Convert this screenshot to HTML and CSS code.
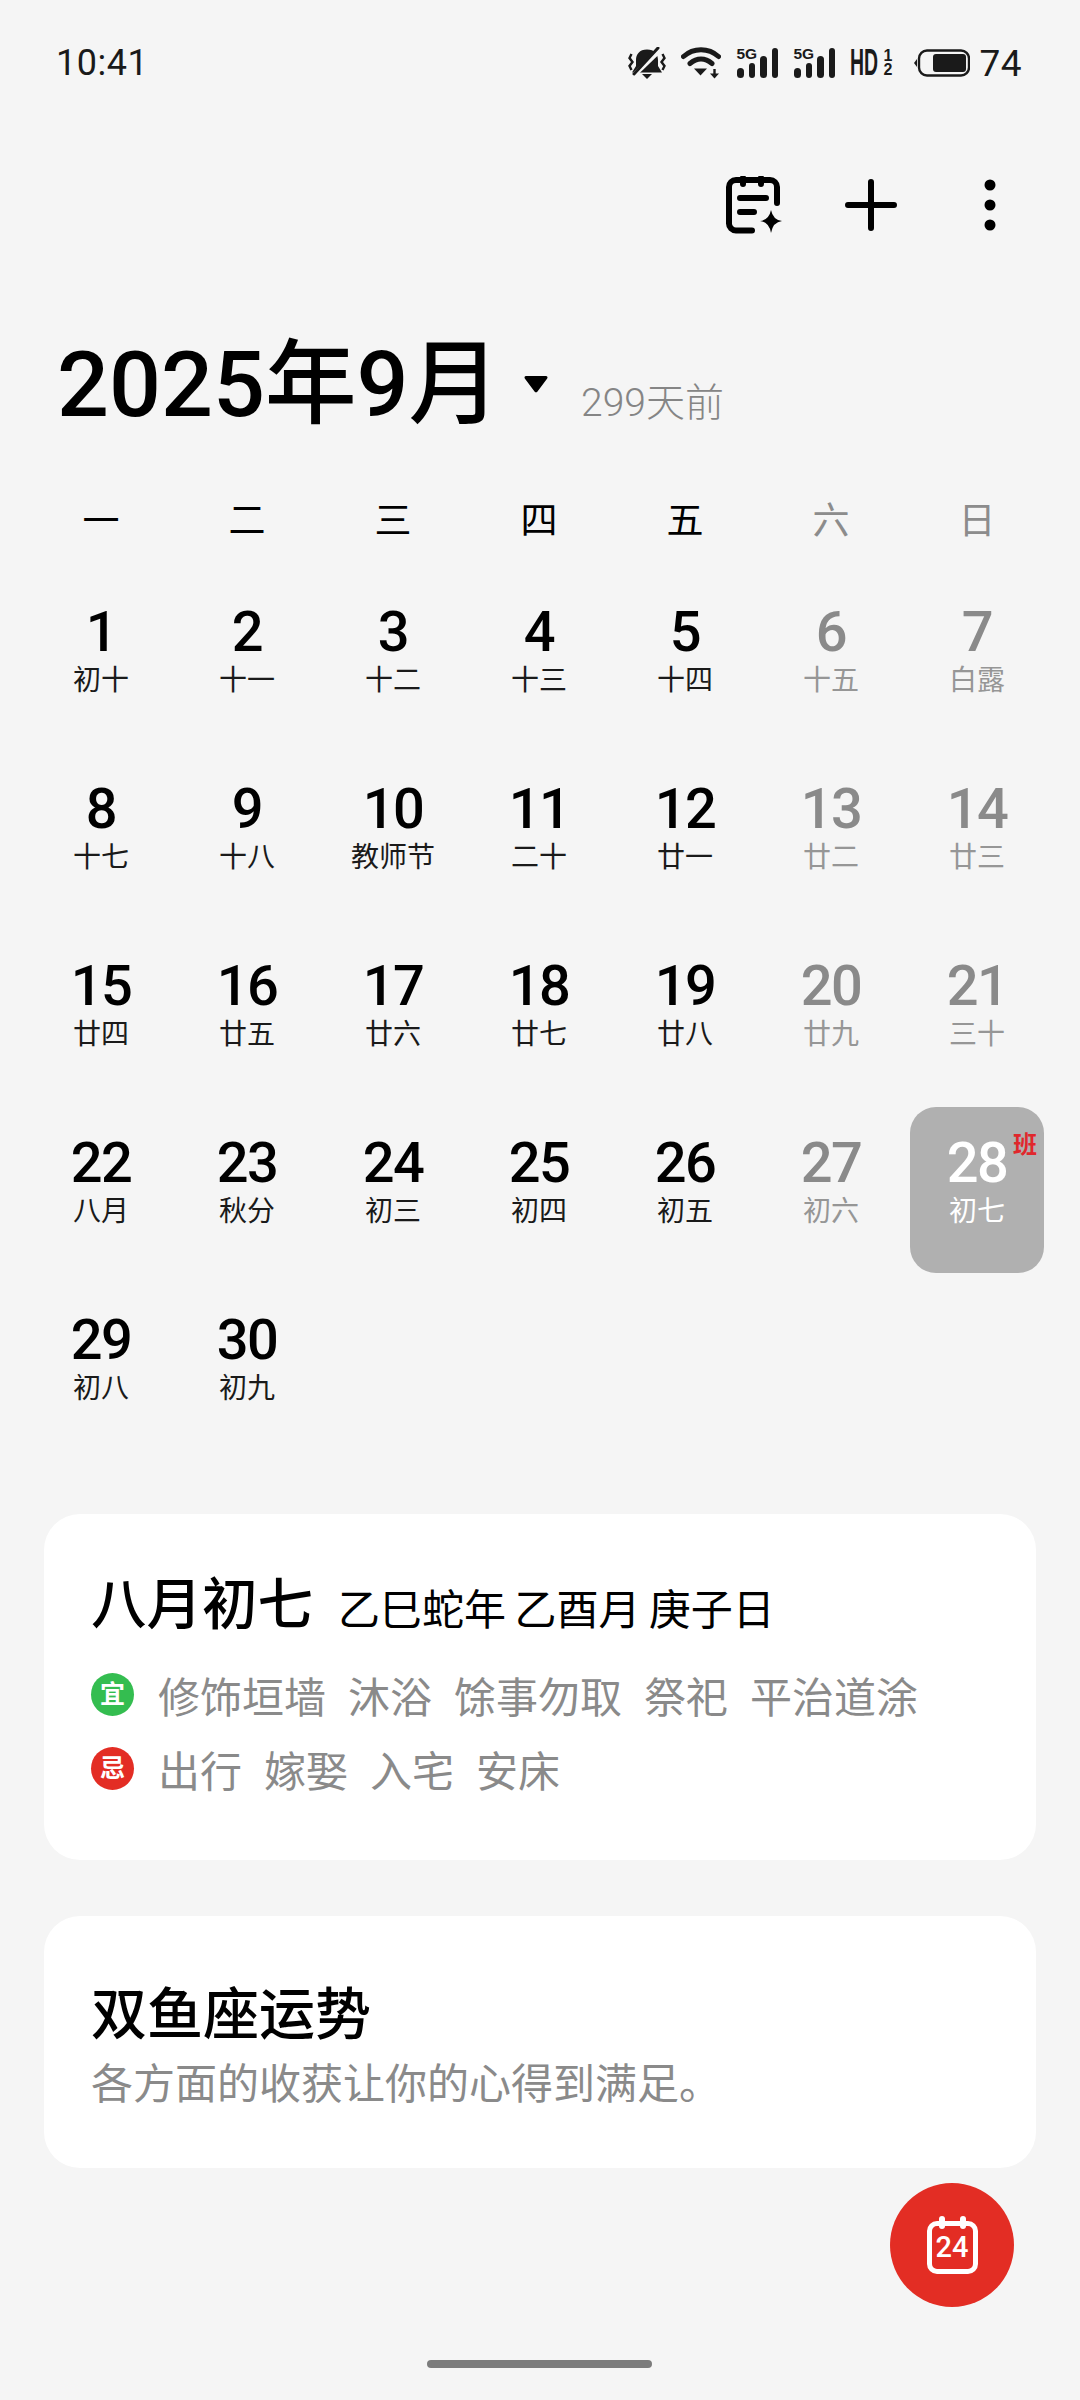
FILE: index.html
```html
<!DOCTYPE html>
<html lang="zh-CN">
<head>
<meta charset="utf-8">
<title>日历</title>
<link rel="stylesheet" href="styles.css">
</head>
<body>
<div class="page">
  <header class="status">
    <span class="time">10:41</span>
    <div class="status-icons">
      <svg class="ic-bell" viewBox="0 0 38 32"><path d="M19 2.500c-7.500 0-11 5-11 10.500v6l-4 6.500h30l-4-6.500v-6c0-5.500-3.500-10.500-11-10.500z" fill="#1a1a1a"/><path d="M14 27h10l-5 5z" fill="#1a1a1a"/><path d="M4 30L32 3" stroke="#f5f5f5" stroke-width="5"/><path d="M6 27L30 1" stroke="#1a1a1a" stroke-width="3" stroke-linecap="round"/><path d="M3.500 7L1.500 11l3 4-3 4 2 4M34.500 7l2 4-3 4 3 4-2 4" fill="none" stroke="#1a1a1a" stroke-width="2.400"/></svg>
      <svg class="ic-wifi" viewBox="0 0 40 32"><path d="M2.500 9.500c10-9 25-9 35 0M9 16.500c7-6 15-6 22 0" fill="none" stroke="#1a1a1a" stroke-width="5" stroke-linecap="round"/><path d="M13 21.500h13l-6.500 7z" fill="#1a1a1a"/><path d="M33.500 22v5" stroke="#1a1a1a" stroke-width="2.400"/><path d="M29 26.500h9l-4.500 5z" fill="#1a1a1a"/></svg>
      <div class="signal"><span class="sg">5G</span><i class="b b1"></i><i class="b b2"></i><i class="b b3"></i><i class="b b4"></i></div>
      <div class="signal"><span class="sg">5G</span><i class="b b1"></i><i class="b b2"></i><i class="b b3"></i><i class="b b4"></i></div>
      <div class="hd"><span class="hd-t">HD</span><span class="hd-n"><span>1</span><span>2</span></span></div>
      <svg class="ic-batt" viewBox="0 0 57 28"><path d="M4 10l-3 4 3 4z" fill="#1a1a1a"/><rect x="6" y="1.500" width="50" height="25" rx="8" fill="none" stroke="#1a1a1a" stroke-width="2.400"/><rect x="20" y="5" width="33" height="18" rx="3" fill="#1a1a1a"/></svg>
      <span class="pct">74</span>
    </div>
  </header>

  <div class="toolbar">
    <svg class="ic-note" viewBox="0 0 56 58"><path d="M26 54.500H10a7 7 0 0 1-7-7V11a7 7 0 0 1 7-7h34a7 7 0 0 1 7 7v16" fill="none" stroke="#000" stroke-width="6" stroke-linecap="round"/><path d="M17 2v6M35 2v6" stroke="#000" stroke-width="6" stroke-linecap="round"/><path d="M14 22h26M14 36h14" stroke="#000" stroke-width="6" stroke-linecap="round"/><path d="M45 34q2 10 11 11q-9 1-11 12q-2-11-11-12q9-1 11-11z" fill="#000"/></svg>
    <svg class="ic-plus" viewBox="0 0 52 52"><path d="M26 3v46M3 26h46" stroke="#000" stroke-width="6" stroke-linecap="round"/></svg>
    <svg class="ic-more" viewBox="0 0 12 52"><circle cx="6" cy="6" r="5.500"/><circle cx="6" cy="26" r="5.500"/><circle cx="6" cy="46" r="5.500"/></svg>
  </div>

  <div class="heading">
    <h1 class="month">2025年9月</h1>
    <svg class="caret" viewBox="0 0 26 20"><path d="M3 2h20a1.500 1.500 0 0 1 1.200 2.400L14.500 17.500a2 2 0 0 1-3 0L1.800 4.400A1.500 1.500 0 0 1 3 2z" fill="#000"/></svg>
    <span class="ago">299天前</span>
  </div>

  <div class="weekdays">
    <span>一</span><span>二</span><span>三</span><span>四</span><span>五</span><span class="off">六</span><span class="off">日</span>
  </div>

  <div class="grid">
    <div class="day"><b>1</b><small>初十</small></div>
    <div class="day"><b>2</b><small>十一</small></div>
    <div class="day"><b>3</b><small>十二</small></div>
    <div class="day"><b>4</b><small>十三</small></div>
    <div class="day"><b>5</b><small>十四</small></div>
    <div class="day off"><b>6</b><small>十五</small></div>
    <div class="day off"><b>7</b><small>白露</small></div>
    <div class="day"><b>8</b><small>十七</small></div>
    <div class="day"><b>9</b><small>十八</small></div>
    <div class="day"><b>10</b><small>教师节</small></div>
    <div class="day"><b>11</b><small>二十</small></div>
    <div class="day"><b>12</b><small>廿一</small></div>
    <div class="day off"><b>13</b><small>廿二</small></div>
    <div class="day off"><b>14</b><small>廿三</small></div>
    <div class="day"><b>15</b><small>廿四</small></div>
    <div class="day"><b>16</b><small>廿五</small></div>
    <div class="day"><b>17</b><small>廿六</small></div>
    <div class="day"><b>18</b><small>廿七</small></div>
    <div class="day"><b>19</b><small>廿八</small></div>
    <div class="day off"><b>20</b><small>廿九</small></div>
    <div class="day off"><b>21</b><small>三十</small></div>
    <div class="day"><b>22</b><small>八月</small></div>
    <div class="day"><b>23</b><small>秋分</small></div>
    <div class="day"><b>24</b><small>初三</small></div>
    <div class="day"><b>25</b><small>初四</small></div>
    <div class="day"><b>26</b><small>初五</small></div>
    <div class="day off"><b>27</b><small>初六</small></div>
    <div class="day today"><b>28</b><small>初七</small><em class="badge">班</em></div>
    <div class="day"><b>29</b><small>初八</small></div>
    <div class="day"><b>30</b><small>初九</small></div>
  </div>

  <section class="card almanac">
    <div class="al-head"><h2 class="card-title">八月初七</h2><span class="al-sub">乙巳蛇年 乙酉月 庚子日</span></div>
    <div class="al-row first"><span class="dot good">宜</span><span class="item">修饰垣墙</span><span class="item">沐浴</span><span class="item">馀事勿取</span><span class="item">祭祀</span><span class="item">平治道涂</span></div>
    <div class="al-row"><span class="dot bad">忌</span><span class="item">出行</span><span class="item">嫁娶</span><span class="item">入宅</span><span class="item">安床</span></div>
  </section>

  <section class="card fortune">
    <h2 class="card-title">双鱼座运势</h2>
    <p class="fortune-text">各方面的收获让你的心得到满足。</p>
  </section>

  <button class="fab" aria-label="今天">
    <span class="fab-cal"><i class="ring r1"></i><i class="ring r2"></i>24</span>
  </button>
  <div class="home-bar"></div>
</div>
</body>
</html>
```

FILE: styles.css
```css
* { box-sizing: border-box; }
html, body { margin: 0; padding: 0; }
body {
  background: #f5f5f5;
  color: #000;
  font-family: Roboto, "Noto Sans CJK SC", sans-serif;
}
.page { position: relative; width: 1080px; height: 2400px; overflow: hidden; }

/* status bar */
.status { height: 124px; display: flex; align-items: center; justify-content: space-between; padding: 2px 58px 0 56px; color: #1a1a1a; }
.time { font-size: 36px; letter-spacing: 0.5px; }
.status-icons { display: flex; align-items: center; }
.ic-bell { width: 38px; height: 32px; }
.ic-wifi { width: 40px; height: 32px; margin-left: 15px; }
.signal { position: relative; width: 42px; height: 30px; margin-left: 15px; display: flex; align-items: flex-end; gap: 5px; justify-content: flex-end; }
.sg { position: absolute; left: 0; top: -1px; font: 700 15.5px/14px "Liberation Sans", sans-serif; }
.b { display: block; background: #1a1a1a; border-radius: 4px; width: 6.5px; }
.b1 { height: 10px; } .b2 { height: 15px; } .b3 { height: 22px; } .b4 { height: 30px; }
.hd { display: flex; align-items: center; margin-left: 15px; width: 45px; height: 30px; }
.hd-t { font: 700 36px/30px "Liberation Sans", sans-serif; transform: scaleX(0.54); transform-origin: left center; width: 33px; flex: none; }
.hd-n { display: flex; flex-direction: column; font: 700 16px/14px "Liberation Sans", sans-serif; }
.ic-batt { width: 57px; height: 28px; margin-left: 18px; }
.pct { font-size: 37px; margin-left: 9px; letter-spacing: 0.5px; }

/* toolbar */
.toolbar { height: 164px; display: flex; align-items: center; justify-content: flex-end; padding: 0 84px 2px 0; }
.ic-note { width: 56px; height: 58px; margin-right: 63px; }
.ic-plus { width: 52px; height: 52px; margin-right: 87px; }
.ic-more { width: 12px; height: 52px; }

/* heading */
.heading { display: flex; align-items: baseline; padding-left: 57px; margin-top: 47px; height: 100px; }
.month { margin: 0; font-size: 91.5px; line-height: 100px; font-weight: 500; }
.caret { width: 26px; height: 20px; margin-left: 23px; align-self: center; margin-top: -2px; }
.ago { margin-left: 32px; font-size: 39px; font-weight: 300; color: #858585; }

/* weekdays */
.weekdays { display: grid; grid-template-columns: repeat(7, 146px); padding-left: 28px; margin-top: 57px; height: 60px; line-height: 60px; font-size: 37px; text-align: center; }
.weekdays .off { color: #8c8c8c; }

/* month grid */
.grid { display: grid; grid-template-columns: repeat(7, 146px); grid-auto-rows: 166px; row-gap: 11px; padding-left: 28px; margin-top: 24px; }
.day { position: relative; display: flex; flex-direction: column; align-items: center; padding-top: 24px; }
.day b { font-size: 56px; line-height: 64px; font-weight: 500; letter-spacing: -1.5px; }
.day small { font-size: 28px; line-height: 38px; margin-top: -2px; color: #1a1a1a; }
.day.off b { color: #8a8a8a; }
.day.off small { color: #969696; }
.today { background: #b0b0b0; border-radius: 26px; width: 134px; margin-left: 6px; color: #fff; }
.today b { color: #fff; }
.today small { color: #fff; }
.badge { position: absolute; top: 24px; right: 7px; font-style: normal; font-weight: 700; font-size: 24px; line-height: 28px; color: #e0272c; }

/* cards */
.card { background: #fff; border-radius: 36px; margin: 0 44px; }
.almanac { margin-top: 64px; height: 346px; padding: 56px 48px 0 47px; }
.al-head { display: flex; align-items: center; height: 72px; }
.card-title { margin: 0; font-size: 55.5px; line-height: 72px; font-weight: 500; }
.al-sub { margin-left: 25px; font-size: 42px; word-spacing: -2px; }
.al-row { display: flex; align-items: center; height: 75px; font-size: 42px; color: #8a8a8a; gap: 22px; }
.al-row.first { margin-top: 15px; height: 74px; }
.dot { width: 43px; height: 43px; border-radius: 50%; color: #fff; font-size: 25px; font-weight: 700; line-height: 43px; text-align: center; flex: none; margin-right: 2px; }
.good { background: #34bd50; }
.bad { background: #e32d24; }
.fortune { margin-top: 56px; height: 252px; padding: 63px 46px 0 47px; }
.fortune .card-title { font-size: 56px; }
.fortune-text { margin: 4px 0 0; font-size: 42px; line-height: 60px; color: #8a8a8a; }

/* floating action + gesture bar */
.fab { position: absolute; left: 890px; top: 2183px; width: 124px; height: 124px; border: 0; padding: 0; border-radius: 50%; background: #e32d24; display: flex; align-items: center; justify-content: center; }
.fab-cal { position: relative; display: block; width: 51px; height: 53px; border: 5px solid #fff; border-radius: 10px; margin-top: 5px; color: #fff; font: 500 29px/43px Roboto, sans-serif; text-align: center; }
.ring { position: absolute; top: -10px; width: 6px; height: 13px; border-radius: 3px; background: #fff; }
.r1 { left: 7px; } .r2 { right: 7px; }
.home-bar { position: absolute; left: 427px; top: 2360px; width: 225px; height: 8px; border-radius: 4px; background: #7c7c7c; }
```
